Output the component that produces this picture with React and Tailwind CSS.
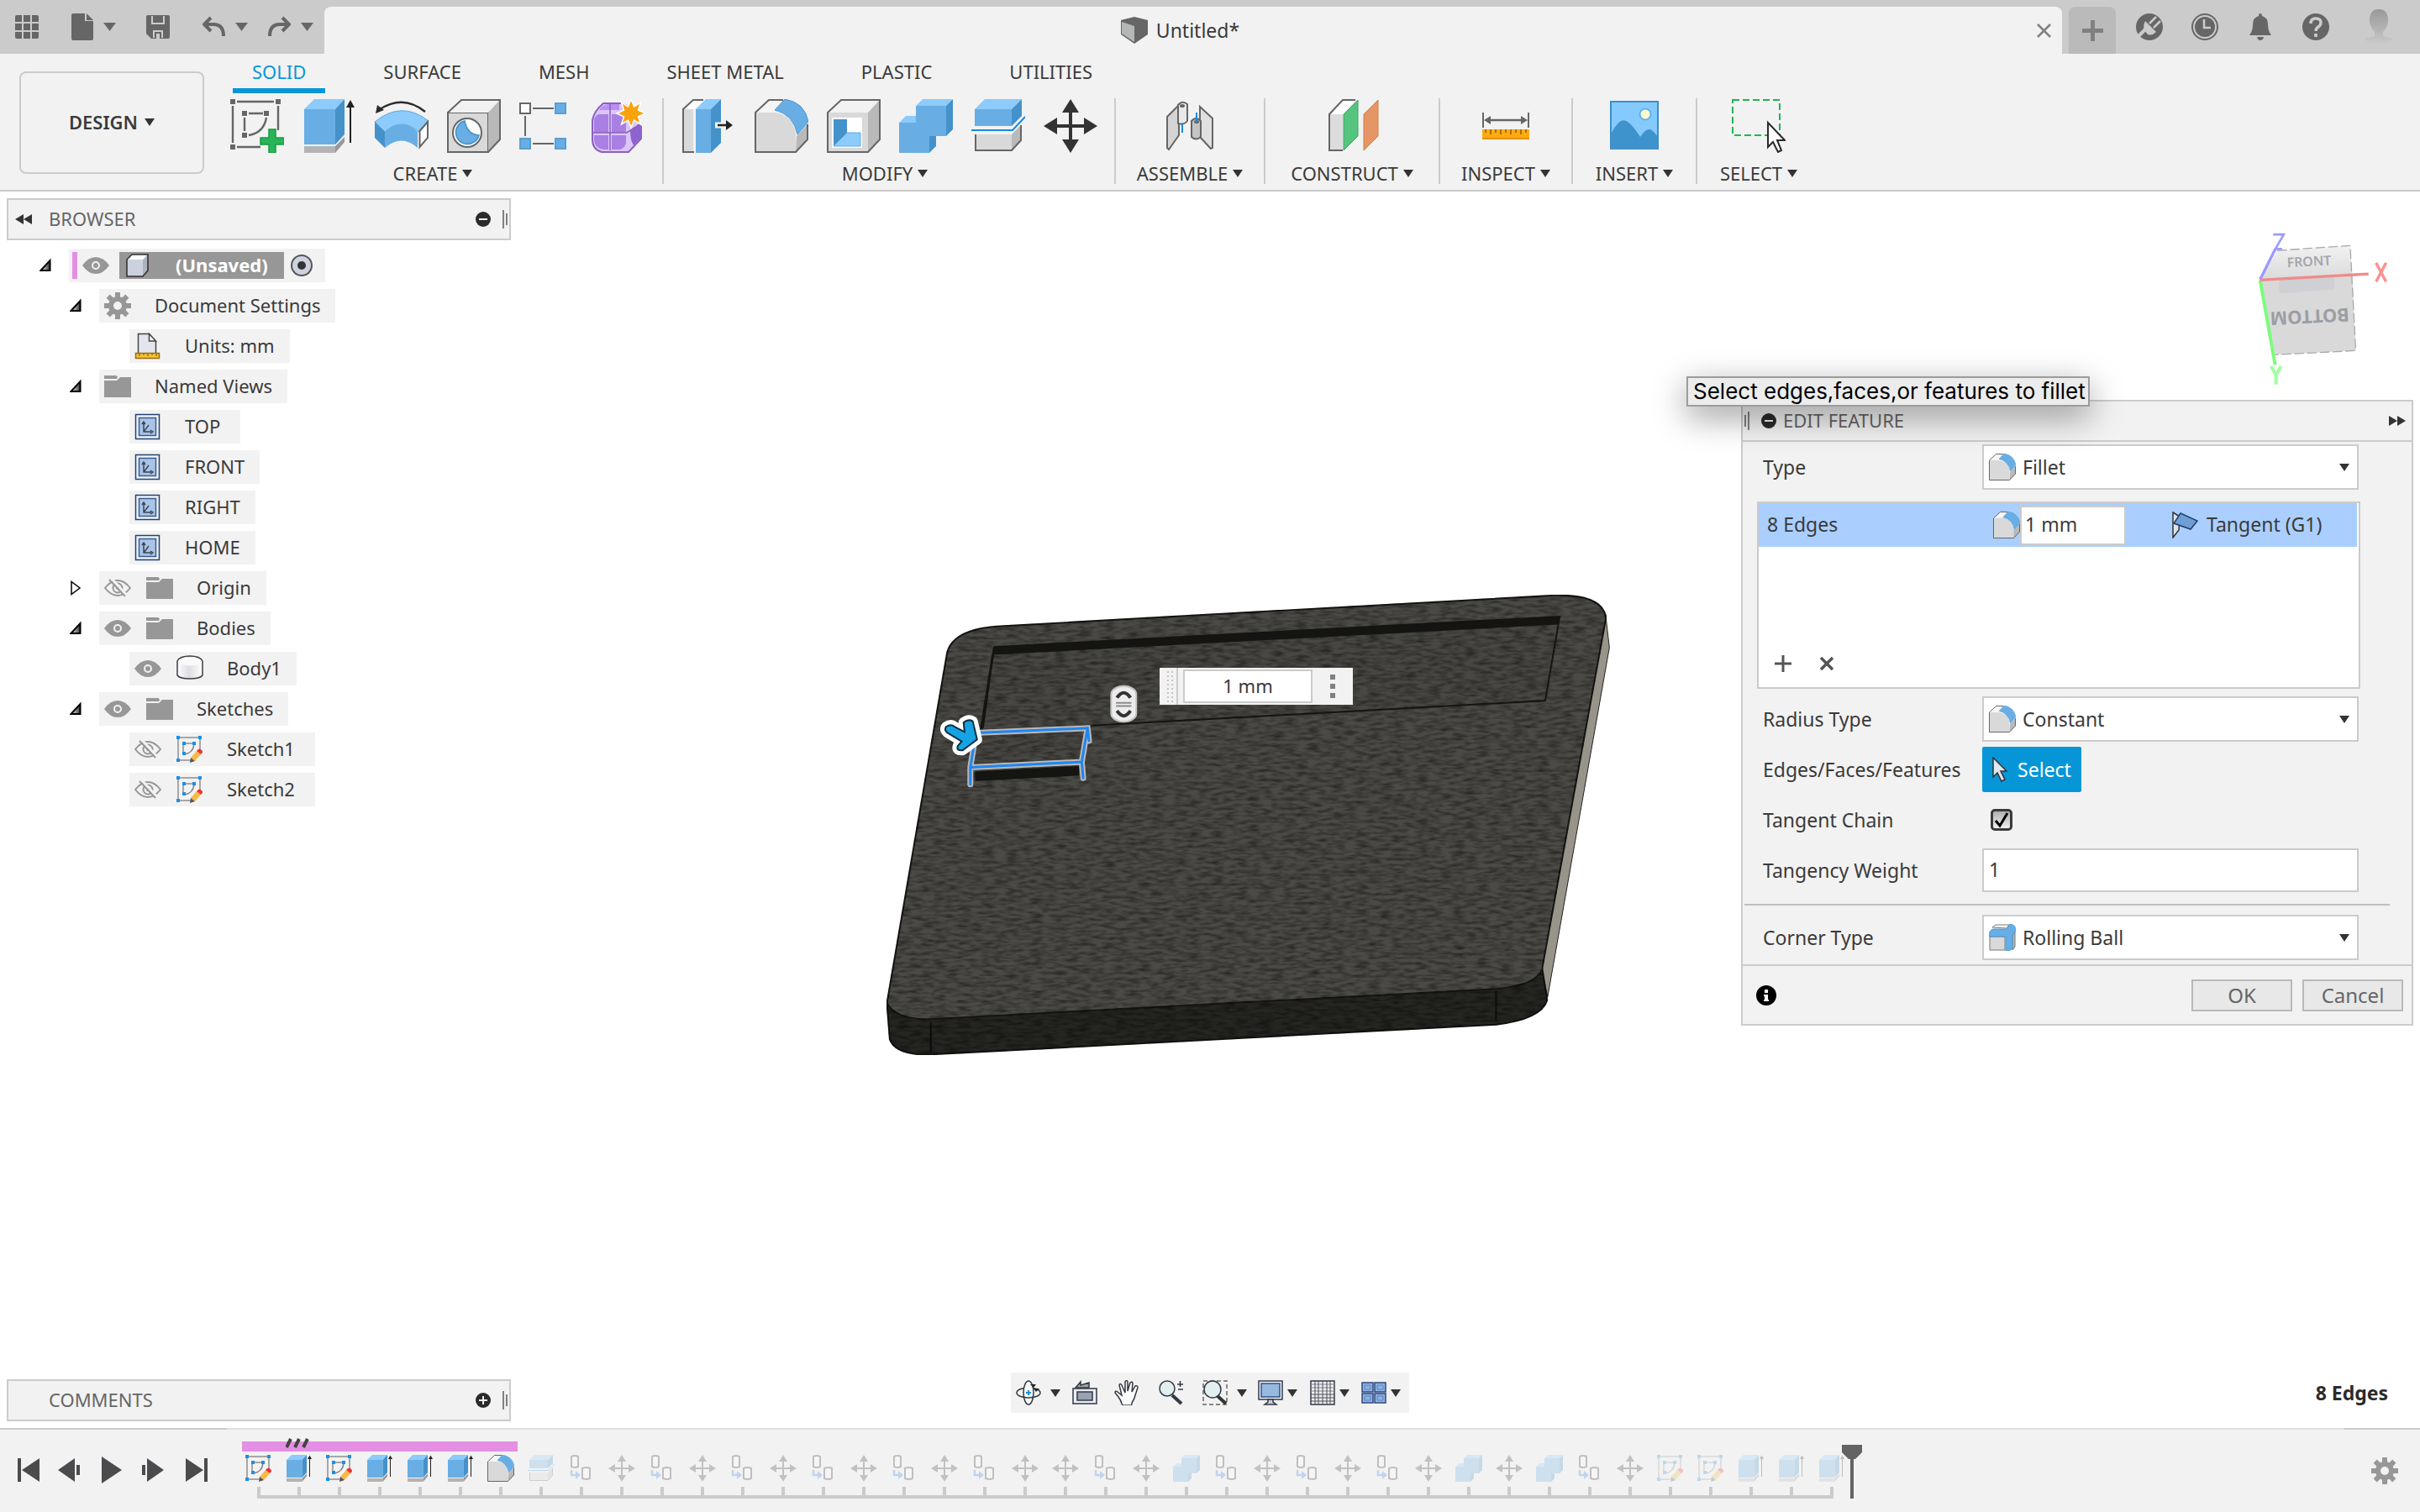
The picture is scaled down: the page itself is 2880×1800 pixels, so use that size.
import React from "react";

const INK = "#666666";
const MID = "#68aee5";
const LIGHT = "#8ccbfb";
const DARK = "#4591ca";

function Svg({ w = 32, h = w, vb = `0 0 ${w} ${h}`, className = "", children, ...rest }) {
  return (
    <svg width={w} height={h} viewBox={vb} className={`shrink-0 ${className}`} fill="none" aria-hidden="true" {...rest}>
      {children}
    </svg>
  );
}

function Caret({ w = 12, h = 9, color = "#333333" }) {
  return (
    <Svg w={w} h={h} vb="0 0 12 9" preserveAspectRatio="none">
      <path d="M0 0h12L6 9z" fill={color} />
    </Svg>
  );
}

/* ---------- Ribbon glyphs, drawn on a 64 unit square ---------- */

const glyphs = {
  sketch: (
    <>
      <path d="M8 3h44M3 8v44M57 8v29M8 57h28M22 17h17M17 22v16" stroke={INK} strokeWidth="2.4" />
      <path d="M43 22Q40 40 22 43" stroke={INK} strokeWidth="2.4" />
      <path d="M0 0h6v6H0zM54 0h6v6h-6zM0 54h6v6H0zM14 14h6v6h-6zM40 14h6v6h-6zM14 40h6v6h-6z" fill={INK} />
      <path d="M46 36h8v10h10v8H54v10h-8V54H36v-8h10z" fill="#29b557" stroke="#169a43" strokeWidth="1.5" />
    </>
  ),
  extrude: (
    <>
      <path d="M2 12h37v42H2z" fill={MID} />
      <path d="M2 12L14 0h36L39 12z" fill={LIGHT} />
      <path d="M39 12L50 0v42L39 54z" fill={DARK} />
      <path d="M2 56h37v8H2z" fill="#b3b3b3" />
      <path d="M39 56l11-11v6L39 64z" fill="#979797" />
      <path d="M57 8v44" stroke="#222" strokeWidth="2" />
      <path d="M57 1l5 9H52z" fill="#222" />
    </>
  ),
  revolve: (
    <>
      <path d="M60 15Q34-6 6 12" stroke="#2b2b2b" strokeWidth="2.4" />
      <path d="M1 17l2-10 8 6z" fill="#2b2b2b" />
      <path d="M0 27Q32 1 64 26L52 39Q32 21 12 39z" fill={LIGHT} stroke="#5aa6e0" />
      <path d="M0 27l12 12v19L0 46z" fill={DARK} />
      <path d="M12 39Q32 21 51 39v19Q32 41 12 58z" fill={MID} />
      <path d="M53.5 38L63 27v19L53.5 57z" fill="#fff" stroke={INK} strokeWidth="2" />
    </>
  ),
  hole: (
    <>
      <path d="M1 16h48v47H1z" fill="#d9d9d9" stroke={INK} strokeWidth="2" />
      <path d="M1 16L17 1h46L49 16z" fill="#f2f2f2" />
      <path d="M49 16L63 1v47L49 63z" fill="#b9b9b9" />
      <path d="M1 16L17 1h46v47L49 63H1z" stroke={INK} strokeWidth="2" />
      <circle cx="24" cy="40" r="17" fill="#fff" stroke={INK} strokeWidth="2" />
      <path d="M21 26a14 14 0 1 0 17 17Q24 42 21 26z" fill={MID} stroke={DARK} strokeWidth="1.5" />
    </>
  ),
  pattern: (
    <>
      <path d="M16 11h25M7 20v24M16 53h25" stroke={INK} strokeWidth="2" />
      <path d="M1 5h12v12H1z" fill="#fff" stroke={INK} strokeWidth="2" />
      <path d="M43 5h12v12H43zM1 47h12v12H1zM43 47h12v12H43z" fill={MID} stroke="#5a9fd0" strokeWidth="2" />
    </>
  ),
  form: (
    <>
      <path d="M1 25Q3 14 14 5h22l12 6 11 22v14L44 63H12Q1 60 1 48z" fill="#dcc6f8" stroke="#8a61bd" strokeWidth="2" />
      <path d="M10 11q5-5 11-5h12v7H10z" fill="#bb8df5" />
      <path d="M3 25q0-4 5-7h12v22H3zM24 18h17v22H24zM3 43h17v17h-6Q3 58 3 48zM24 43h17v10q-3 7-8 7h-9z" fill="#a97fe4" />
      <path d="M46 37l13-9v18l-9 9q-4-6-4-18z" fill="#8f63cf" />
      <path d="M22 6v55M2 40h40l17-11" stroke="#8a61bd" strokeWidth="1.5" />
      <path d="M47 0l3.5 9 8-5-3 9 8.5 4-8.5 4 3 9-8-5-3.5 9-3.5-9-8 5 3-9-8.5-4 8.5-4-3-9 8 5z" fill="#f9a20b" stroke="#fff" strokeWidth="1.5" />
    </>
  ),
  press: (
    <>
      <path d="M1 12h12v51H1z" fill="#d9d9d9" />
      <path d="M1 12L13 1h12L14 12z" fill="#fff" />
      <path d="M14 63H1V12L13 1h12" stroke={INK} strokeWidth="2" />
      <path d="M16 12h18v52H16z" fill={MID} />
      <path d="M16 12L28 0h18L34 12z" fill={LIGHT} />
      <path d="M34 12L46 0v52L34 64z" fill={DARK} />
      <path d="M39 31h20" stroke="#f2f2f2" strokeWidth="7" />
      <path d="M42 31h12" stroke="#222" strokeWidth="2.5" />
      <path d="M52 25l8 6-8 6z" fill="#222" />
    </>
  ),
  fillet: (
    <>
      <path d="M1 16h23Q46 19 49 42v21H1z" fill="#d9d9d9" />
      <path d="M1 16L17 1h17L24 15z" fill="#f5f5f5" />
      <path d="M50 44l13-14v18L49 63z" fill="#b9b9b9" />
      <path d="M34 1H17L1 16v47h48l14-15V30" stroke={INK} strokeWidth="2" />
      <path d="M36 0Q60 4 64 27L51 42Q46 18 24 13z" fill={MID} stroke="#4a9ad6" strokeWidth="1" />
    </>
  ),
  shell: (
    <>
      <path d="M1 16h48v47H1z" fill="#d9d9d9" />
      <path d="M1 16L17 1h46L49 16z" fill="#f2f2f2" />
      <path d="M49 16L63 1v47L49 63z" fill="#b9b9b9" />
      <path d="M1 16L17 1h46v47L49 63H1z" stroke={INK} strokeWidth="2" />
      <path d="M6 22h36v36H6z" fill="#fff" />
      <path d="M8 24h16v16L8 56z" fill={DARK} />
      <path d="M8 56l16-16h16v16z" fill={LIGHT} stroke="#5fabe0" />
    </>
  ),
  combine: (
    <>
      <path d="M0 28h20V8h36v36H36v20H0z" fill={MID} />
      <path d="M0 28l8-8h12v8zM20 8l8-8h36l-8 8z" fill={LIGHT} />
      <path d="M56 8l8-8v36l-8 8zM36 44h8v12l-8 8z" fill={DARK} />
    </>
  ),
  split: (
    <>
      <path d="M4 12h44v20H4z" fill={MID} />
      <path d="M4 12L16 0h44L48 12z" fill={LIGHT} />
      <path d="M48 12L60 0v20L48 32z" fill={DARK} />
      <path d="M0 37h49l15-16" stroke="#1a88e0" strokeWidth="2" />
      <path d="M5 42h43v19H5z" fill="#d9d9d9" />
      <path d="M48 42l11-11v17L48 61z" fill="#b9b9b9" />
      <path d="M5 42v19h43l11-12V31" stroke={INK} strokeWidth="2" />
    </>
  ),
  move: (
    <>
      <path d="M32 12v40M12 32h40" stroke="#333" strokeWidth="4" />
      <path d="M32 0l10 16H22zM32 64L22 48h20zM0 32l16-10v20zM64 32L48 42V22z" fill="#333" />
    </>
  ),
  joint: (
    <>
      <path d="M5 21l14-14v36L7 60l-2-2z" fill="#d4d4d4" stroke={INK} strokeWidth="2" />
      <path d="M18 7q5-6 11-1v20q-4 5-11 3z" fill="#e8e8e8" stroke={INK} strokeWidth="2" />
      <ellipse cx="23" cy="8" rx="3" ry="2" fill={INK} />
      <path d="M44 9l15 14v35l-2 1-13-14z" fill="#e0e0e0" stroke={INK} strokeWidth="2" />
      <path d="M34 26q5-6 11 0v19q-6 5-11 0z" fill="#c4c4c4" stroke={INK} strokeWidth="2" />
      <ellipse cx="40" cy="27" rx="3" ry="2" fill={INK} />
      <path d="M23 30v10M40 16v11" stroke="#1a88e0" strokeWidth="2" />
    </>
  ),
  planes: (
    <>
      <path d="M5 18h16v43H5z" fill="#dcdcdc" />
      <path d="M5 18L21 1h15L21 18z" fill="#fff" />
      <path d="M36 1H21L5 18v43h16" stroke={INK} strokeWidth="2" />
      <path d="M22 18L39 1v43L22 61z" fill="#55c47f" stroke="#36aa63" />
      <path d="M46 18L63 1v43L46 61z" fill="#e69664" stroke="#cf7d49" />
    </>
  ),
  measure: (
    <>
      <path d="M5 16v18M59 16v18" stroke={INK} strokeWidth="2" />
      <path d="M10 25h44" stroke={INK} strokeWidth="2.4" />
      <path d="M6 25l8-5v10zM58 25l-8-5v10z" fill={INK} />
      <path d="M4 36h56v12H4z" fill="#ffab10" />
      <path d="M4 46h56v2H4z" fill="#e39300" />
      <path d="M8 36v4M14 36v6M20 36v4M26 36v6M32 36v4M38 36v6M44 36v4M50 36v6M56 36v4" stroke="#8a5c00" strokeWidth="1.5" />
    </>
  ),
  picture: (
    <>
      <path d="M4 3h56v56H4z" fill="#85caff" stroke="#3d8fc8" strokeWidth="2" />
      <circle cx="45" cy="18" r="6.5" fill="#fffbd0" stroke="#62b2ea" strokeWidth="2" />
      <path d="M4 60V42q10-20 18-16 6 2 17 19 6-10 12-9 4 2 9 9v15z" fill="#3f93cc" />
    </>
  ),
  select: (
    <>
      <path d="M1 1h56v42H1z" stroke="#20b455" strokeWidth="2" strokeDasharray="8 4" />
      <path d="M43 28v29l6-6 6 12 4-2-5-12h9z" fill="#fff" stroke="#2b2b2b" strokeWidth="2" />
    </>
  ),
};

function Glyph({ name, size = 64, className = "" }) {
  return (
    <Svg w={size} vb="0 0 64 64" className={className}>
      {glyphs[name]}
    </Svg>
  );
}

/* ---------- Small glyphs ---------- */

function SketchIcon() {
  return (
    <Svg>
      <path d="M4 2h22M2 4v23M28 4v12M4 29h14M10 9h9M8 11v9" stroke="#8f8f8f" strokeWidth="1.5" />
      <path d="M21 10q-1 10-11 12" stroke="#7d7d7d" strokeWidth="1.5" />
      <path d="M0 0h4v4H0zM26 0h4v4h-4zM0 27h4v4H0zM7 7h4v4H7zM19 7h4v4h-4zM7 19h4v4H7z" fill="#1b8fe8" />
      <path d="M24 18l5 4-7 8-5-4z" fill="#f6ba45" />
      <path d="M24 18l2-2q2-1 4 1 2 2 0 4l-1 1z" fill="#f03030" />
      <path d="M17 26l5 4-6 2z" fill="#555" />
    </Svg>
  );
}

function CopyIcon() {
  return (
    <Svg>
      <path d="M4 2q4-2 8 0v12q-4 2-8 0zM17 16q5-2 9 0v12q-4 2-9 0z" fill="#fff" stroke="#2a2a2a" strokeWidth="2" />
      <path d="M4 18v6h8" stroke="#2f7fe0" strokeWidth="2.5" />
      <path d="M9 19l6 5-6 5z" fill="#2f7fe0" />
    </Svg>
  );
}

function Eye() {
  return (
    <Svg>
      <path d="M0 16Q7 6 16 6t16 10q-7 10-16 10T0 16z" fill="#979797" />
      <circle cx="16" cy="16" r="4" stroke="#f2f2f2" strokeWidth="2" />
    </Svg>
  );
}

function EyeOff() {
  return (
    <Svg>
      <path d="M1 16Q8 7 16 7t15 9q-7 9-15 9T1 16z" stroke="#979797" strokeWidth="2" />
      <circle cx="16" cy="16" r="5.5" stroke="#979797" strokeWidth="2" />
      <circle cx="16" cy="16" r="2" fill="#979797" />
      <path d="M9 5l18 20" stroke="#f2f2f2" strokeWidth="3" />
      <path d="M6 6l19 20" stroke="#979797" strokeWidth="2" />
    </Svg>
  );
}

function Folder() {
  return (
    <Svg>
      <path d="M0 3h14q1 0 2 2l-1 2H0zM0 9h15l4-4h13v24H0z" fill="#979797" />
    </Svg>
  );
}

function Gear({ color = "#979797" }) {
  const teeth = [0, 45, 90, 135, 180, 225, 270, 315];
  return (
    <Svg>
      {teeth.map((a) => (
        <rect key={a} x="13" y="0" width="6" height="8" fill={color} transform={`rotate(${a} 16 16)`} />
      ))}
      <circle cx="16" cy="16" r="8" stroke={color} strokeWidth="6" />
    </Svg>
  );
}

function ViewIcon() {
  return (
    <Svg>
      <path d="M1.5 1.5h28v29h-28z" fill="#eef4fc" stroke="#26416e" strokeWidth="1.5" />
      <path d="M5.5 5.5h20v21h-20z" fill="#a9c4e6" stroke="#3a5d94" strokeWidth="1.5" />
      <path d="M11 11v11h9M11 22l6-8M9 13l2-3 2 3M19 20l3 2-3 2" stroke="#3c4657" strokeWidth="1.5" />
    </Svg>
  );
}

function UnitsIcon() {
  return (
    <Svg>
      <path d="M4.5 1.5h13l8 9v15h-21z" fill="#e3e5ee" stroke="#444" strokeWidth="1.5" />
      <path d="M17.5 1.5v8.5h8z" fill="#fff" stroke="#444" strokeWidth="1.5" />
      <path d="M1.5 24.5h28v6h-28z" fill="#f3c433" stroke="#9a6b12" strokeWidth="1.5" />
      <path d="M6 25v3M11 25v2M16 25v3M21 25v2M26 25v3" stroke="#7a5200" />
    </Svg>
  );
}

function BodyIcon() {
  return (
    <Svg>
      <defs>
        <linearGradient id="cyl" x1="0" x2="1">
          <stop offset="0" stopColor="#fff" />
          <stop offset=".45" stopColor="#dcdde2" />
          <stop offset="1" stopColor="#fff" />
        </linearGradient>
      </defs>
      <path d="M1 7q3-6 15-6t15 6v17q-3 4-15 4T1 24z" fill="url(#cyl)" stroke="#3d3d3d" strokeWidth="1.5" />
      <ellipse cx="16" cy="7.5" rx="14" ry="5" fill="#fafafa" />
    </Svg>
  );
}

function CubeIcon() {
  return (
    <Svg w={28}>
      <path d="M1 7l6-6h19v19l-6 7H1z" fill="#fff" />
      <path d="M1 7h19v20H1z" fill="#ccd1dd" />
      <path d="M20 7l6-6v19l-6 7z" fill="#aeb3c0" />
      <path d="M1 7l6-6h19v19l-6 7H1z" stroke="#2e2e2e" strokeWidth="1.5" />
    </Svg>
  );
}

/* ---------- Application bar ---------- */

function AppBar() {
  const flat = "flex items-center";
  return (
    <div className="flex h-16 items-stretch bg-[#cbcbcb]">
      <div className="flex w-[386px] shrink-0 items-center pl-[18px]">
        <button aria-label="Data panel" className={flat}>
          <Svg w={28}>
            <path
              d="M2 0h6v8H0V2q0-2 2-2zM10 0h8v8h-8zM20 0h6q2 0 2 2v6h-8zM0 10h8v8H0zM10 10h8v8h-8zM20 10h8v8h-8zM0 20h8v8H2q-2 0-2-2zM10 20h8v8h-8zM20 20h8v6q0 2-2 2h-6z"
              fill={INK}
            />
          </Svg>
        </button>
        <button aria-label="File" className={`${flat} ml-[39px] gap-3`}>
          <Svg w={26} h={32}>
            <path d="M2 0h14v9h10v21q0 2-2 2H2q-2 0-2-2V2q0-2 2-2zM18 0l8 8h-8z" fill={INK} />
          </Svg>
          <Caret w={15} h={10} color={INK} />
        </button>
        <button aria-label="Save" className={`${flat} ml-9`}>
          <Svg w={28}>
            <path d="M2 0h24q2 0 2 2v24q0 2-2 2H6l-6-6V2q0-2 2-2z" fill={INK} />
            <path d="M7 1v9h14V1M9 27v-8h10v8" stroke="#cbcbcb" strokeWidth="2" />
            <path d="M12 22h4v6h-4z" fill="#cbcbcb" />
          </Svg>
        </button>
        <button aria-label="Undo" className={`${flat} ml-[39px] gap-3`}>
          <Svg w={27} h={26}>
            <path d="M10 2L2 10l8 8M3 10h10q12 0 12 14" stroke={INK} strokeWidth="4" />
          </Svg>
          <Caret w={15} h={10} color={INK} />
        </button>
        <button aria-label="Redo" className={`${flat} ml-6 gap-3`}>
          <Svg w={27} h={26}>
            <path d="M17 2l8 8-8 8M24 10H14Q2 10 2 24" stroke={INK} strokeWidth="4" />
          </Svg>
          <Caret w={15} h={10} color={INK} />
        </button>
      </div>

      <div className="mt-2 flex flex-1 items-center rounded-t-lg bg-[#f2f2f2]">
        <div className="flex flex-1 items-center justify-center gap-[10px]">
          <Svg w={32}>
            <path d="M0 4l16-4 16 4v17L16 32 0 21z" fill={INK} />
            <path d="M1 6l15 5v19L1 20z" fill="#b4b7b7" />
          </Svg>
          <span className="text-[23px] leading-8">Untitled*</span>
        </div>
        <button aria-label="Close document" className="mr-3">
          <Svg w={19}>
            <path d="M2 2l15 15M17 2L2 17" stroke="#808080" strokeWidth="2.5" />
          </Svg>
        </button>
      </div>

      <button aria-label="New document" className="mt-2 ml-2 flex w-14 items-center justify-center rounded-t-lg bg-[#bababa]">
        <Svg w={25}>
          <path d="M12.5 0v25M0 12.5h25" stroke="#808080" strokeWidth="5" />
        </Svg>
      </button>

      <div className="flex items-center gap-[34px] pr-8 pl-6">
        <button aria-label="Extensions">
          <Svg w={32}>
            <circle cx="16" cy="16" r="16" fill={INK} />
            <path d="M3 27l9-9" stroke="#cbcbcb" strokeWidth="4" />
            <path d="M24 4l-8 8M29 9l-8 8" stroke="#cbcbcb" strokeWidth="2.5" />
            <path d="M11 9l13 13q-5 5-10 3-8-7-3-16z" fill="#cbcbcb" />
          </Svg>
        </button>
        <button aria-label="Job status">
          <Svg w={32}>
            <circle cx="16" cy="16" r="15" stroke={INK} strokeWidth="2" />
            <circle cx="16" cy="16" r="12" fill={INK} />
            <path d="M15 7v10h8" stroke="#cbcbcb" strokeWidth="2.5" />
          </Svg>
        </button>
        <button aria-label="Notifications">
          <Svg w={32}>
            <path d="M16 0q2 0 2 3 7 2 7 10 0 8 4 13H3q4-5 4-13 0-8 7-10 0-3 2-3zM12 28h8q-1 4-4 4t-4-4z" fill={INK} />
          </Svg>
        </button>
        <button aria-label="Help">
          <Svg w={32}>
            <circle cx="16" cy="16" r="16" fill={INK} />
            <path d="M10 12q0-6 6-6t6 5q0 3-3 5-3 2-3 5" stroke="#cbcbcb" strokeWidth="3.5" />
            <circle cx="16" cy="26" r="2.2" fill="#cbcbcb" />
          </Svg>
        </button>
        <button aria-label="Account" className="ml-2">
          <Svg w={34} h={42}>
            <defs>
              <linearGradient id="person" x2="0" y2="1">
                <stop stopColor="#999" />
                <stop offset=".65" stopColor="#b8b8b8" />
                <stop offset="1" stopColor="#cbcbcb" />
              </linearGradient>
            </defs>
            <path d="M17 0q11 0 11 13 0 8-6 14v4q1 2 12 4-5 7-17 7T0 35q11-2 12-4v-4Q6 21 6 13 6 0 17 0z" fill="url(#person)" />
          </Svg>
        </button>
      </div>
    </div>
  );
}

/* ---------- Ribbon ---------- */

const tabs = ["SOLID", "SURFACE", "MESH", "SHEET METAL", "PLASTIC", "UTILITIES"];

const groups = [
  { label: "CREATE", icons: ["sketch", "extrude", "revolve", "hole", "pattern", "form"], cls: "pr-5", shift: "pr-3" },
  { label: "MODIFY", icons: ["press", "fillet", "shell", "combine", "split", "move"], cls: "pl-[22px] pr-5", shift: "pr-3" },
  { label: "ASSEMBLE", icons: ["joint"], cls: "w-[178px]" },
  { label: "CONSTRUCT", icons: ["planes"], cls: "w-[208px]" },
  { label: "INSPECT", icons: ["measure"], cls: "w-[158px]" },
  { label: "INSERT", icons: ["picture"], cls: "w-[148px]" },
  { label: "SELECT", icons: ["select"], cls: "w-[148px]" },
];

function Ribbon() {
  return (
    <div className="flex h-[164px] border-b-2 border-[#c9c9c9] bg-[#f2f2f2]">
      <button className="mt-[21px] ml-[23px] flex h-[122px] w-[220px] shrink-0 items-center justify-center gap-2 rounded-lg border-2 border-[#cbcbcb] pb-[2px] text-[22px] font-semibold">
        DESIGN
        <Caret />
      </button>
      <div className="ml-[31px] flex flex-col">
        <nav className="ml-[3px] flex gap-[46px]" role="tablist">
          {tabs.map((t, i) => (
            <button
              key={t}
              role="tab"
              aria-selected={i === 0}
              className={`h-[47px] border-b-[6px] px-[23px] text-[22px] leading-[43px] ${
                i === 0 ? "border-[#0696d7] text-[#0696d7]" : "border-transparent"
              }`}
            >
              {t}
            </button>
          ))}
        </nav>
        <div className="mt-[6px] flex">
          {groups.map((g, i) => (
            <section key={g.label} className={`flex h-[102px] flex-col items-center ${i ? "border-l-2 border-[#cbcbcb]" : ""} ${g.cls}`}>
              <div className="flex gap-[22px] pt-px">
                {g.icons.map((n) => (
                  <button key={n} aria-label={n}>
                    <Glyph name={n} />
                  </button>
                ))}
              </div>
              <button className={`mt-2 flex items-center gap-[6px] text-[22px] leading-8 ${g.shift ?? ""}`}>
                {g.label}
                <Caret />
              </button>
            </section>
          ))}
        </div>
      </div>
    </div>
  );
}

/* ---------- Browser tree ---------- */

function Grip({ flip }) {
  return (
    <span className={`flex items-center gap-[2px] ${flip ? "flex-row-reverse" : ""}`}>
      <span className="h-[22px] w-[2px] bg-[#808080]" />
      <span className="h-[14px] w-[2px] bg-[#808080]" />
    </span>
  );
}

function RoundSign({ plus }) {
  return (
    <Svg w={18}>
      <circle cx="9" cy="9" r="9" fill="#2b2b2b" />
      <path d={plus ? "M4 9h10M9 4v10" : "M4 9h10"} stroke="#f2f2f2" strokeWidth="2" />
    </Svg>
  );
}

function Fold({ open }) {
  return (
    <Svg w={14} h={18}>
      {open ? (
        <>
          <defs>
            <linearGradient id="fold" x1="0" x2="1">
              <stop stopColor="#fff" />
              <stop offset="1" stopColor="#333" />
            </linearGradient>
          </defs>
          <path d="M1.5 15l11-12v12z" fill="url(#fold)" stroke="#000" strokeWidth="2" />
        </>
      ) : (
        <path d="M2 1.5v15l10-7.5z" stroke="#000" strokeWidth="1.5" />
      )}
    </Svg>
  );
}

const tree = [
  { text: "Document Settings", fold: "open", icons: [Gear] },
  { text: "Units: mm", icons: [UnitsIcon] },
  { text: "Named Views", fold: "open", icons: [Folder] },
  { text: "TOP", icons: [ViewIcon], wide: true },
  { text: "FRONT", icons: [ViewIcon] },
  { text: "RIGHT", icons: [ViewIcon] },
  { text: "HOME", icons: [ViewIcon] },
  { text: "Origin", fold: "shut", icons: [EyeOff, Folder] },
  { text: "Bodies", fold: "open", icons: [Eye, Folder] },
  { text: "Body1", icons: [Eye, BodyIcon] },
  { text: "Sketches", fold: "open", icons: [Eye, Folder] },
  { text: "Sketch1", icons: [EyeOff, SketchIcon], wide: true },
  { text: "Sketch2", icons: [EyeOff, SketchIcon], wide: true },
];

function PanelBar({ title, plus, children }) {
  return (
    <div className="flex h-[50px] w-[600px] items-center border-2 border-[#cbcbcb] bg-[#f2f2f2] pr-[2px] pl-2 text-[22px] leading-8 text-[#666666]">
      <span className="w-10">{children}</span>
      <h2 className="flex-1 pb-[2px]">{title}</h2>
      <button aria-label={`Toggle ${title}`} className="mr-[14px]">
        <RoundSign plus={plus} />
      </button>
      <Grip />
    </div>
  );
}

function Browser() {
  return (
    <aside className="mt-2 ml-2">
      <PanelBar title="BROWSER">
        <Svg w={20} h={12}>
          <path d="M10 0v12L0 6zM20 0v12L10 6z" fill="#333" />
        </Svg>
      </PanelBar>
      <ul className="mt-[10px] flex flex-col gap-2 text-[22px] leading-8">
        <li className="flex h-10 items-center pl-[39px]">
          <Fold open />
          <div className="ml-[21px] flex h-10 items-center bg-[#f2f2f2] pr-[15px] pl-1">
            <span className="h-8 w-[6px] bg-[#e48fe4]" />
            <span className="ml-[6px]">
              <Eye />
            </span>
            <span className="ml-3 flex h-8 w-[196px] items-center bg-[#979797] pl-2 font-bold text-white">
              <CubeIcon />
              <span className="ml-[31px] pb-[2px]">(Unsaved)</span>
            </span>
            <label className="relative ml-2 flex">
              <input
                type="radio"
                name="active"
                defaultChecked
                aria-label="Activate component"
                className="size-[26px] appearance-none rounded-full border-2 border-[#555] bg-[#cdd2df]"
              />
              <span className="absolute top-2 left-2 size-[10px] rounded-full bg-[#333]" />
            </label>
          </div>
        </li>
        {tree.map((n) => {
          const deep = !n.fold;
          return (
            <li key={n.text} className={`flex h-10 items-center ${deep ? "pl-[146px]" : "pl-[75px]"}`}>
              {n.fold && (
                <span className="mr-[21px]">
                  <Fold open={n.fold === "open"} />
                </span>
              )}
              <div className={`flex h-10 items-center bg-[#f2f2f2] pl-[6px] ${n.wide ? "pr-6" : "pr-[18px]"}`}>
                <span className="flex gap-[18px]">
                  {n.icons.map((I, i) => (
                    <I key={i} />
                  ))}
                </span>
                <span className="ml-7 pb-[2px]">{n.text}</span>
              </div>
            </li>
          );
        })}
      </ul>
    </aside>
  );
}

/* ---------- Viewport drawing ---------- */

function Model() {
  return (
    <svg width="900" height="590" viewBox="0 0 1568 1568" preserveAspectRatio="none" fill="none" aria-label="Model">
      <defs>
        <filter id="grain" x="0" y="0" width="1" height="1" colorInterpolationFilters="sRGB">
          <feTurbulence type="fractalNoise" baseFrequency="0.04 0.1" numOctaves="2" seed="4" result="n" />
          <feColorMatrix in="n" type="matrix" values="0 0 0 0 0  0 0 0 0 0  0 0 0 0 0  0.9 0 0 0 -0.33" />
          <feComposite in2="SourceGraphic" operator="in" />
          <feMerge>
            <feMergeNode in="SourceGraphic" />
            <feMergeNode />
          </feMerge>
        </filter>
      </defs>
      <path d="M1517 110L1525 215 1397 1320 1385 1235z" fill="#98948a" stroke="#222" vectorEffect="non-scaling-stroke" />
      <path
        d="M27 1340L33 1455Q45 1503 110 1503L1290 1408Q1385 1390 1396 1330L1385 1225 1290 1290 110 1380z"
        fill="#252522"
        stroke="#111"
        strokeWidth="2"
        vectorEffect="non-scaling-stroke"
        filter="url(#grain)"
      />
      <path
        d="M152 230Q165 158 255 148L1410 50Q1510 45 1518 120L1385 1235Q1370 1285 1290 1295L110 1391Q45 1390 27 1340z"
        fill="#4b4a46"
        stroke="#161614"
        strokeWidth="2"
        vectorEffect="non-scaling-stroke"
        filter="url(#grain)"
      />
      <path d="M118 1400v98M1290 1300v100" stroke="#0c0c0b" strokeWidth="2" vectorEffect="non-scaling-stroke" />
      <path d="M249 213L1422 117 1392 383 220 478z" fill="#484743" filter="url(#grain)" />
      <path d="M249 213L1422 117 1419 142 246 238z" fill="#141412" />
      <path d="M249 213L1422 117 1392 383 450 462M249 213L226 470" stroke="#141412" strokeWidth="2" vectorEffect="non-scaling-stroke" />
      <path d="M247 236L222 478" stroke="#141412" strokeWidth="3" vectorEffect="non-scaling-stroke" />
      <path d="M213 488L442 468 430 575 203 598z" fill="#484743" filter="url(#grain)" />
      <path d="M210 607L425 590v30L210 638z" fill="#141412" />
      {["#b9b9b9", "#1f85f0"].map((c, i) => (
        <path
          key={c}
          d="M200 486L443 470 446 510M443 470L431 577 434 628M431 577L200 594M210 500L200 594 200 648"
          stroke={c}
          strokeWidth={i ? 3 : 7}
          strokeLinecap="round"
          vectorEffect="non-scaling-stroke"
        />
      ))}
      <path
        d="M150 465Q160 455 168 466L188 482 186 452Q196 440 205 448L214 506 184 540Q170 542 174 526L182 512 152 484Q145 475 150 465z"
        stroke="#fff"
        strokeWidth="12"
        strokeLinejoin="round"
        vectorEffect="non-scaling-stroke"
      />
      <path
        d="M150 465Q160 455 168 466L188 482 186 452Q196 440 205 448L214 506 184 540Q170 542 174 526L182 512 152 484Q145 475 150 465z"
        fill="#15a3e3"
        stroke="#0d2f42"
        strokeWidth="2"
        vectorEffect="non-scaling-stroke"
      />
      <rect x="492" y="337" width="52" height="113" rx="26" fill="#ececec" stroke="#c4c4c4" strokeWidth="2" vectorEffect="non-scaling-stroke" />
      <path d="M504 374Q518 342 532 374M504 415Q518 447 532 415" stroke="#333" strokeWidth="4" vectorEffect="non-scaling-stroke" />
      <path d="M502 390h32M502 400h32" stroke="#8a8a8a" strokeWidth="2" vectorEffect="non-scaling-stroke" />
    </svg>
  );
}

function ViewCube() {
  return (
    <Svg w={280} h={220} vb="0 0 846 665">
      <defs>
        <linearGradient id="face" x2="0" y2="1">
          <stop stopColor="#f1f1f1" />
          <stop offset="1" stopColor="#dadada" />
        </linearGradient>
      </defs>
      <path d="M333 146l262-18 8 106-332 18z" fill="url(#face)" />
      <path d="M271 252l332-18 12 272-290 15z" fill="#d9d9d9" />
      <path d="M340 246l198-10v50l-198 14z" fill="#cfd0d3" />
      <path d="M333 146l262-18 20 378-290 15" stroke="#a9a9a9" strokeWidth="4" strokeDasharray="34 12" />
      <path d="M271 250l55-110" stroke="#9a9aff" strokeWidth="10" />
      <path d="M271 252l54 305" stroke="#7dfb7d" strokeWidth="12" />
      <path d="M271 252l390-22" stroke="#f08a8a" strokeWidth="10" />
      <path d="M318 88h38l-30 52h24" stroke="#9a9aff" strokeWidth="8" />
      <path d="M310 562l18 32 18-32M328 590v38" stroke="#a0ffa0" strokeWidth="12" />
      <path d="M688 190l36 68M724 190l-36 68" stroke="#ff9090" strokeWidth="10" />
      <text x="448" y="202" textAnchor="middle" transform="rotate(-3 448 202)" fontSize="48" fontWeight="600" fill="#a3a6ab" fontFamily="Noto Sans">
        FRONT
      </text>
      <text x="448" y="360" textAnchor="middle" transform="rotate(177 448 360)" fontSize="66" fontWeight="700" fill="#9b9ea4" fontFamily="Noto Sans">
        BOTTOM
      </text>
    </Svg>
  );
}

function RadiusInput() {
  return (
    <div className="absolute top-[567px] left-[1380px] flex h-[44px] w-[230px] items-center bg-[#f2f2f2]">
      <Svg w={22} h={44}>
        <path d="M10 4v38M15 4v38" stroke="#c4c4c4" strokeWidth="2" strokeDasharray="2 3" />
        <path d="M21 0v44" stroke="#cbcbcb" strokeWidth="2" />
      </Svg>
      <input
        aria-label="Radius"
        defaultValue="1 mm"
        className="ml-[6px] h-10 w-[154px] border-2 border-[#cbcbcb] bg-white pb-[2px] text-center text-[22px]"
      />
      <button aria-label="More" className="flex flex-1 justify-center">
        <Svg w={6} h={28}>
          <path d="M0 0h6v6H0zM0 11h6v6H0zM0 22h6v6H0z" fill="#808080" />
        </Svg>
      </button>
    </div>
  );
}

/* ---------- Edit feature panel ---------- */

function CornerIcon() {
  return (
    <Svg>
      <path d="M1 15h18v16H1z" fill="#d9d9d9" stroke="#777" />
      <path d="M4 4l4-3h16l-3 4z" fill="#fff" stroke="#777" />
      <path d="M28 14l3-5v18l-3 4z" fill="#b9b9b9" stroke="#777" />
      <path d="M0 15Q0 7 5 6h16l4-6q7 1 7 8l-4 6v15q-2 3-8 3V15z" fill={MID} stroke="#4a9ad6" />
    </Svg>
  );
}

function FilletSmall() {
  return <Glyph name="fillet" size={32} />;
}

function Row({ id, label, children }) {
  return (
    <div className="grid min-h-[54px] grid-cols-[261px_1fr] items-center">
      <label htmlFor={id}>{label}</label>
      {children}
    </div>
  );
}

function Picker({ id, icon, value }) {
  return (
    <div className="flex h-[54px] items-center border-2 border-[#cbcbcb] bg-white pr-[9px] pl-[6px]">
      {icon}
      <select id={id} defaultValue={value} className="ml-2 flex-1 appearance-none bg-transparent leading-8 outline-none">
        <option>{value}</option>
      </select>
      <Caret />
    </div>
  );
}

function EditFeature() {
  return (
    <section className="relative mt-[6px] mr-2 w-[800px] text-[23px] leading-8">
      <header className="flex h-[50px] items-center border-2 border-[#cbcbcb] bg-[#f2f2f2] pr-[7px] pl-[2px] text-[22px] text-[#666666]">
        <Grip flip />
        <button aria-label="Collapse" className="mr-2 ml-[14px]">
          <RoundSign />
        </button>
        <h2 className="flex-1 pb-[2px]">EDIT FEATURE</h2>
        <Svg w={20} h={12}>
          <path d="M0 0v12l10-6zM10 0v12l10-6z" fill="#333" />
        </Svg>
      </header>

      <div className="border-2 border-t-0 border-[#cbcbcb] bg-[#f2f2f2] pt-[3px] pb-[5px]">
        <div className="pr-[63px] pl-6">
          <Row id="type" label="Type">
            <Picker id="type" icon={<FilletSmall />} value="Fillet" />
          </Row>
        </div>

        <div className="mt-[14px] mr-[61px] ml-[17px] flex h-[223px] flex-col border-2 border-[#cbcbcb] bg-white">
          <div className="mr-[2px] flex h-[52px] items-center bg-[#aacfff] pl-[10px]">
            <label htmlFor="radius" className="w-[269px] pb-[2px]">
              8 Edges
            </label>
            <FilletSmall />
            <input id="radius" defaultValue="1 mm" className="h-[47px] w-[126px] border-2 border-[#cbcbcb] bg-white pb-[2px] pl-1" />
            <Svg w={32} className="ml-[54px]">
              <path d="M2 1l8 5-1 16-7 9z" fill="#dfe3ea" stroke="#333" strokeWidth="1.5" />
              <path d="M11 2l20 9-8 10L3 14z" fill="#6f9fd3" stroke="#1f3f70" strokeWidth="1.5" />
            </Svg>
            <span className="ml-[10px] pb-[2px]">Tangent (G1)</span>
          </div>
          <div className="mt-auto flex items-center gap-8 pb-[18px] pl-[19px]">
            <button aria-label="Add selection set">
              <Svg w={20}>
                <path d="M10 0v20M0 10h20" stroke="#555" strokeWidth="3" />
              </Svg>
            </button>
            <button aria-label="Remove selection set">
              <Svg w={20}>
                <path d="M3 3l14 14M17 3L3 17" stroke="#555" strokeWidth="3.5" />
              </Svg>
            </button>
          </div>
        </div>

        <div className="mt-[9px] flex flex-col gap-[6px] pr-[63px] pl-6">
          <Row id="radius-type" label="Radius Type">
            <Picker id="radius-type" icon={<FilletSmall />} value="Constant" />
          </Row>
          <Row id="edges" label="Edges/Faces/Features">
            <button id="edges" className="flex h-[54px] w-[118px] items-center justify-center gap-3 rounded-[2px] bg-[#0696d7] text-white">
              <Svg w={18} h={30}>
                <path d="M1 1v23l5-5 5 10 4-2-5-10h7z" fill="#e3e6ee" stroke="#333" strokeWidth="1.5" />
              </Svg>
              Select
            </button>
          </Row>
          <Row id="chain" label="Tangent Chain">
            <span className="relative ml-[10px] flex w-fit">
              <input
                id="chain"
                type="checkbox"
                defaultChecked
                className="size-[26px] appearance-none rounded-[5px] border-[3px] border-[#3a3a3a] bg-linear-to-b from-[#b0b0b0] to-[#efefef]"
              />
              <Svg w={20} className="pointer-events-none absolute top-[3px] left-[3px]">
                <path d="M3 11l5 6L17 2" stroke="#000" strokeWidth="3" />
              </Svg>
            </span>
          </Row>
          <Row id="weight" label="Tangency Weight">
            <input id="weight" defaultValue="1" className="h-[52px] w-full border-2 border-[#cbcbcb] bg-white pb-[2px] pl-[6px]" />
          </Row>
        </div>

        <hr className="mt-[13px] mr-[26px] ml-[2px] border-t-2 border-[#bfbfbf]" />

        <div className="mt-[11px] pr-[63px] pl-6">
          <Row id="corner" label="Corner Type">
            <Picker id="corner" icon={<CornerIcon />} value="Rolling Ball" />
          </Row>
        </div>
      </div>

      <footer className="flex h-[71px] items-center gap-3 border-2 border-t-0 border-[#cbcbcb] bg-[#f2f2f2] pr-[10px] pl-4 text-[24px] text-[#666666]">
        <span className="flex-1">
          <Svg w={24}>
            <circle cx="12" cy="12" r="12" fill="#000" />
            <path d="M10 5h4v4h-4zM9 11h5v6h1v2H9v-2h1v-4H9z" fill="#fff" />
          </Svg>
        </span>
        <button className="h-[38px] w-[120px] border-2 border-[#b9b9b9] bg-[#e8e8e8]">OK</button>
        <button className="h-[38px] w-[120px] border-2 border-[#b9b9b9] bg-[#e8e8e8]">Cancel</button>
      </footer>

      <div
        role="tooltip"
        className="absolute top-[-28px] left-[-65px] flex h-9 w-[480px] items-center border-2 border-[#9c9c9c] bg-[#ececec] px-[6px] font-['Inter',sans-serif] text-[26px] whitespace-nowrap text-black shadow-[0_12px_40px_rgba(0,0,0,0.4)]"
      >
        Select edges,faces,or features to fillet
      </div>
    </section>
  );
}

/* ---------- Navigation bar ---------- */

const line = { stroke: "#333a45", strokeWidth: 1.5 };

const nav = [
  {
    name: "Orbit",
    more: true,
    cls: "ml-[6px] gap-[11px]",
    art: (
      <>
        <ellipse cx="15" cy="15" rx="14" ry="6" {...line} />
        <ellipse cx="15" cy="15" rx="6" ry="14" {...line} fill="#f8f8f8" />
        <path d="M9 20q6 2 12 0" {...line} />
        <path d="M15 12v6M12 15h6" stroke="#1b8fe8" strokeWidth="2" />
        <path d="M17 5h7l-3 4zM21 10h7l-4 4z" fill="#222" />
      </>
    ),
  },
  {
    name: "Look at",
    cls: "ml-[14px]",
    art: (
      <>
        <path d="M4 9l6-7v4l10-3v6z" fill="#9aa39f" {...line} />
        <path d="M1 10h28v18H1z" fill="#e9edf3" {...line} />
        <path d="M6 14h18v10H6z" fill="#9aa1b0" {...line} />
      </>
    ),
  },
  {
    name: "Pan",
    cls: "ml-5",
    art: (
      <path
        d="M9 28q-1-4-4-8l-4-5q0-3 3-1l5 4-3-12q1-3 3 0l4 9V2q2-3 3 0v11l3-10q3-2 3 1l-1 10 4-7q3-1 3 2l-3 9q-1 5-4 9 0 3-1 3h-10z"
        fill="#fbfbfb"
        {...line}
      />
    ),
  },
  {
    name: "Zoom",
    cls: "ml-[22px]",
    art: (
      <>
        <path d="M17 18l11 10" stroke="#333a45" strokeWidth="4" />
        <circle cx="11" cy="10" r="9" fill="#e2efef" {...line} />
        <path d="M23 5h7M26.5 1v7M24 11h6" {...line} />
      </>
    ),
  },
  {
    name: "Zoom window",
    more: true,
    cls: "ml-[23px] gap-[11px]",
    art: (
      <>
        <path d="M1 1h28v28H1z" stroke="#666" strokeWidth="1.5" strokeDasharray="5 3" />
        <path d="M18 19l10 9" stroke="#333" strokeWidth="4" />
        <circle cx="12" cy="11" r="10" fill="#e2efef" {...line} />
      </>
    ),
  },
  {
    name: "Display settings",
    more: true,
    cls: "ml-[13px] gap-[5px]",
    art: (
      <>
        <path d="M1 1h28v22H1z" fill="#f4f6fa" {...line} />
        <path d="M4 4h22v16H4z" fill="#97b9de" stroke="#33518a" strokeWidth="1.5" />
        <path d="M12 23h6v3l4 3H8l4-3z" fill="#ccd" {...line} />
      </>
    ),
  },
  {
    name: "Grid and snaps",
    more: true,
    cls: "ml-[15px] gap-[5px]",
    art: (
      <>
        <path d="M1 1h28v28H1z" fill="#ededf1" {...line} />
        <path d="M1 5h28M1 9h28M1 13h28" stroke="#85858d" strokeWidth="1" />
        <path d="M1 17h28M1 21h28M1 25h28M6 1v28M10 1v28M15 1v28M20 1v28M24 1v28" stroke="#4e4e56" strokeWidth="1" />
      </>
    ),
  },
  {
    name: "Viewports",
    more: true,
    cls: "ml-[14px] gap-[5px]",
    art: (
      <>
        <path d="M1 3h13v11H1zM16 3h13v11H16zM1 16h13v11H1zM16 16h13v11H16z" fill="#8fb3e0" stroke="#2c4a80" strokeWidth="1.5" />
        <path d="M4 6h7v5H4zM19 6h7v5h-7zM4 19h7v5H4zM19 19h7v5h-7z" stroke="#5c80b8" />
      </>
    ),
  },
];

function NavBar() {
  return (
    <div className="flex h-12 w-[474px] items-center bg-[#f2f2f2]">
      {nav.map((n) => (
        <button key={n.name} aria-label={n.name} className={`flex items-center ${n.cls}`}>
          <Svg w={30}>{n.art}</Svg>
          {n.more && <Caret />}
        </button>
      ))}
    </div>
  );
}

/* ---------- Timeline ---------- */

const steps =
  "sketch extrude sketch extrude extrude extrude fillet split copy move copy move copy move copy move copy move copy move move copy move combine copy move copy move copy move combine move combine copy move sketch sketch extrude extrude extrude".split(
    " "
  );
const ACTIVE = 7;

function StepIcon({ kind }) {
  if (kind === "sketch") return <SketchIcon />;
  if (kind === "copy") return <CopyIcon />;
  return <Glyph name={kind} size={32} />;
}

const playback = [
  ["First", "M0 2h4v28H0zM26 2v28L5 16z", "ml-[21px]"],
  ["Previous", "M0 16L20 2v28zM22 10h4v12h-4z", "ml-[22px]"],
  ["Play", "M0 0l24 16L0 32z", "ml-[26px]"],
  ["Next", "M26 16L6 2v28zM0 10h4v12H0z", "ml-[22px]"],
  ["Last", "M22 2h4v28h-4zM0 2v28l21-14z", "ml-[26px]"],
];

function Timeline() {
  return (
    <footer className="flex h-[100px] bg-[#f2f2f2]">
      <div className="flex w-[270px] shrink-0 items-center border-t-2 border-[#cbcbcb] pb-[2px]">
        {playback.map(([name, d, cls]) => (
          <button key={name} aria-label={name} className={cls}>
            <Svg w={26} h={32}>
              <path d={d} fill="#4b4b4d" />
            </Svg>
          </button>
        ))}
      </div>
      <div className="flex flex-1 border-t-2 border-[#e0e0e0] pl-[18px]">
        <div className="pt-[14px]">
          <div className="h-3 w-[328px] bg-[#e48fe4] pl-[52px]">
            <Svg w={32} h={12} className="relative -top-1">
              <path d="M1 11L6 1M11 11l5-10M21 11l5-10" stroke="#444" strokeWidth="4" />
            </Svg>
          </div>
          <ol className="mt-1 flex">
            {steps.map((k, i) => (
              <li key={i} className="flex w-12 flex-col">
                <button aria-label={`${k} ${i + 1}`} className={`ml-1 w-8 ${i < ACTIVE ? "" : "opacity-25"}`}>
                  <StepIcon kind={k} />
                </button>
                <span className="mt-[6px] ml-[18px] h-[10px] w-1 bg-[#cbcbcb]" />
                <span
                  className={`h-1 bg-[#cbcbcb] ${i === 0 ? "ml-[18px]" : ""} ${i === steps.length - 1 ? "w-[22px]" : ""}`}
                />
              </li>
            ))}
          </ol>
        </div>
        <Svg w={24} h={64} className="-ml-4 mt-[18px]">
          <path d="M0 0h24v9l-8 8h-2v47h-4V17H8L0 9z" fill="#636363" />
        </Svg>
      </div>
      <div className="flex w-[90px] shrink-0 items-center border-t-2 border-[#cbcbcb] pl-8">
        <button aria-label="Timeline settings">
          <Gear />
        </button>
      </div>
    </footer>
  );
}

export default function App() {
  return (
    <div className="flex min-h-screen flex-col bg-white font-['Noto_Sans','Open_Sans',sans-serif] text-[#3a3a3a]">
      <AppBar />
      <Ribbon />
      <main className="relative flex flex-1 flex-col overflow-hidden">
        <div className="absolute top-[462px] left-[1040px]">
          <Model />
        </div>
        <RadiusInput />
        <div className="relative flex flex-1 items-start justify-between">
          <Browser />
          <div className="mt-[22px] flex flex-col items-end">
            <ViewCube />
            <EditFeature />
          </div>
        </div>
        <div className="relative grid grid-cols-[1fr_auto_1fr] items-start pb-2">
          <div className="mt-2 ml-2">
            <PanelBar title="COMMENTS" plus />
          </div>
          <NavBar />
          <p className="mt-2 mr-[38px] text-right text-[23px] leading-8 font-bold text-[#2b2b2b]">8 Edges</p>
        </div>
      </main>
      <Timeline />
    </div>
  );
}
